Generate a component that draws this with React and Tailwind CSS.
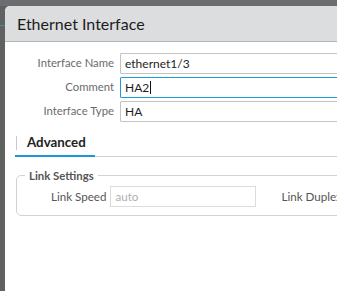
import { useState } from "react";

const FONT = { fontFamily: "Lato, 'Open Sans', sans-serif" };

function Row({ label, value, focused }) {
  return (
    <div className="flex items-center h-[21px]">
      <div className="w-[110px] shrink-0 pr-[1px] text-right text-[11.3px] text-[#6b6b6b] whitespace-nowrap">{label}</div>
      <div
        className={
          "ml-[5px] flex-1 h-full flex items-center pl-[4px] text-[12px] text-[#1e1e1e] border rounded-[1px] " +
          (focused ? "border-[#1a9ddc]" : "border-[#c4c4c4]")
        }
      >
        {value}
        {focused && <span className="w-px h-[13px] bg-[#111] ml-[1px]" />}
      </div>
    </div>
  );
}

export default function App() {
  const [rows] = useState([
    { label: "Interface Name", value: "ethernet1/3" },
    { label: "Comment", value: "HA2", focused: true },
    { label: "Interface Type", value: "HA" },
  ]);

  return (
    <div className="w-[337px] h-[291px] overflow-hidden bg-[#606262] flex flex-col" style={FONT}>
      <div className="h-[6px] shrink-0 bg-[#6a6e70]" />
      <div className="flex-1 flex">
        <div className="w-[5px] shrink-0 flex flex-col">
          <div className="h-[19px]" />
          <div className="h-px bg-[#3d8f9a]" />
        </div>
        <div className="flex-1 bg-white rounded-tl-[5px] overflow-hidden flex flex-col">
          <div className="h-[36px] shrink-0 bg-[#dcdddf] border-b border-[#b3b4b6] flex items-center pl-[12px]">
            <span className="text-[16px] text-[#1c1c1c]">Ethernet Interface</span>
          </div>

          <div className="pt-[11px] flex flex-col gap-[3px] -mr-[4px]">
            {rows.map(r => (
              <Row key={r.label} {...r} />
            ))}
          </div>

          <div className="mt-[10px] ml-[10px] flex flex-col">
            <div className="flex items-center h-[22px]">
              <div className="w-px h-[14px] bg-[#c8c8c8] ml-[1px]" />
              <span className="ml-[10px] text-[13.3px] font-bold text-[#222]">Advanced</span>
            </div>
            <div className="relative h-[2px] mt-[1px] border-b border-[#d0d0d0]">
              <div className="absolute left-0 top-0 w-[80px] h-[2px] bg-[#1b9ad6]" />
            </div>
          </div>

          <div className="mt-[18px] ml-[11px] -mr-[6px] relative border border-[#d2d2d2] rounded-[5px] h-[41px] flex items-center">
            <span className="absolute -top-[9px] left-[8px] px-[4px] bg-white text-[11.4px] font-bold text-[#555] whitespace-nowrap">
              Link Settings
            </span>
            <div className="flex items-center mt-[2px] w-full">
              <span className="ml-[34px] shrink-0 text-[11.6px] text-[#555] whitespace-nowrap">Link Speed</span>
              <div className="ml-[4px] shrink-0 w-[146px] h-[21px] border border-[#dcdcdc] flex items-center pl-[4px] text-[11.6px] text-[#b0b0b0]">
                auto
              </div>
              <span className="ml-[25px] shrink-0 text-[11.6px] text-[#555] whitespace-nowrap">Link Duplex</span>
            </div>
          </div>
        </div>
      </div>
    </div>
  );
}
